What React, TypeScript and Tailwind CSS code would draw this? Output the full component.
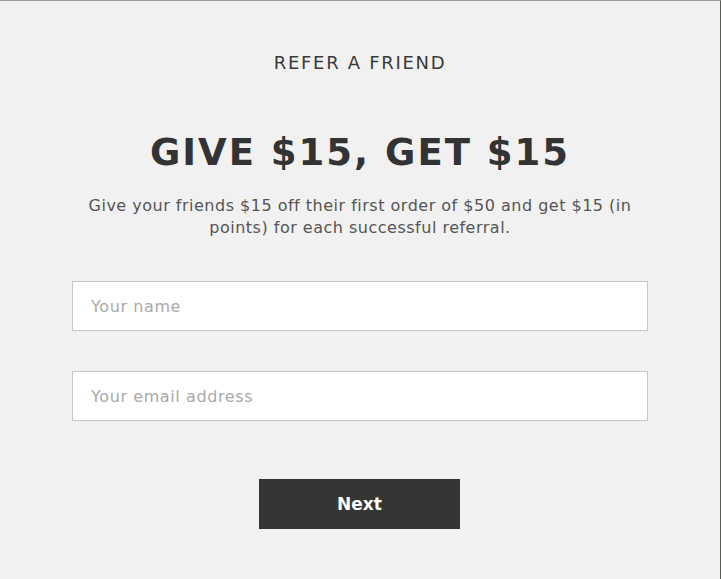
export default function App() {
  return (
    <div
      className="min-h-[579px] w-full bg-[#f1f1f1] border-t border-r border-t-[#9aa194] border-r-[#56604f] text-[#333333]"
      style={{ fontFamily: '"DejaVu Sans", "Liberation Sans", sans-serif' }}
    >
      <div className="flex flex-col items-center">
        <p className="mt-[50px] text-[18px] leading-[24px] font-normal tracking-[1.7px] text-[#3a3a3a]">
          REFER A FRIEND
        </p>
        <h1 className="mt-[56px] text-[37px] leading-[44px] font-bold tracking-[2px] text-[#333333]">
          GIVE $15, GET $15
        </h1>
        <p className="mt-[20px] text-center text-[16px] leading-[22px] tracking-[0.5px] text-[#555555]">
          Give your friends $15 off their first order of $50 and get $15 (in
          <br />
          points) for each successful referral.
        </p>
      </div>

      <form className="mt-[42px] flex flex-col px-[72px]" onSubmit={(e) => e.preventDefault()}>
        <input
          type="text"
          placeholder="Your name"
          className="h-[50px] w-full border border-[#c6c6c6] bg-white px-[18px] text-[16px] tracking-[0.6px] text-[#333333] placeholder:text-[#a9a9a9] outline-none"
        />
        <input
          type="email"
          placeholder="Your email address"
          className="mt-[40px] h-[50px] w-full border border-[#c6c6c6] bg-white px-[18px] text-[16px] tracking-[0.6px] text-[#333333] placeholder:text-[#a9a9a9] outline-none"
        />
        <div className="mt-[58px] flex justify-center">
          <button
            type="submit"
            className="ml-[-1px] h-[50px] w-[201px] bg-[#353533] pt-[2px] text-[17px] font-bold text-white"
          >
            Next
          </button>
        </div>
      </form>
    </div>
  )
}
